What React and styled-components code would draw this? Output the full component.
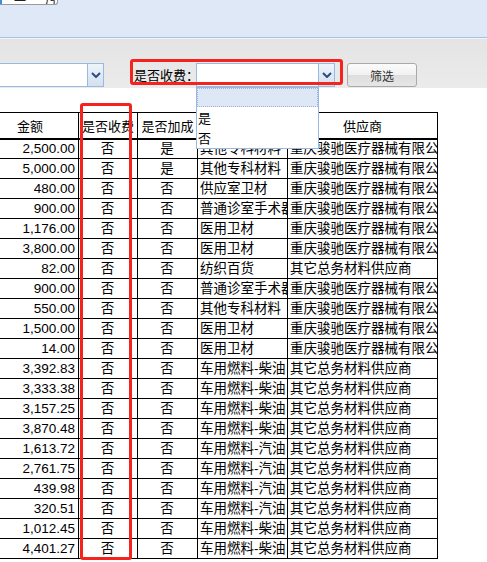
import React from "react";
import styled, { createGlobalStyle } from "styled-components";

const GlobalStyle = createGlobalStyle`
  * { box-sizing: border-box; }
  body { margin: 0; background: #fff; }
`;

const rows = [
  ["2,500.00", "否", "是", "其他专科材料", "重庆骏驰医疗器械有限公司"],
  ["5,000.00", "否", "是", "其他专科材料", "重庆骏驰医疗器械有限公司"],
  ["480.00", "否", "否", "供应室卫材", "重庆骏驰医疗器械有限公司"],
  ["900.00", "否", "否", "普通诊室手术器械", "重庆骏驰医疗器械有限公司"],
  ["1,176.00", "否", "否", "医用卫材", "重庆骏驰医疗器械有限公司"],
  ["3,800.00", "否", "否", "医用卫材", "重庆骏驰医疗器械有限公司"],
  ["82.00", "否", "否", "纺织百货", "其它总务材料供应商"],
  ["900.00", "否", "否", "普通诊室手术器械", "重庆骏驰医疗器械有限公司"],
  ["550.00", "否", "否", "其他专科材料", "重庆骏驰医疗器械有限公司"],
  ["1,500.00", "否", "否", "医用卫材", "重庆骏驰医疗器械有限公司"],
  ["14.00", "否", "否", "医用卫材", "重庆骏驰医疗器械有限公司"],
  ["3,392.83", "否", "否", "车用燃料-柴油", "其它总务材料供应商"],
  ["3,333.38", "否", "否", "车用燃料-柴油", "其它总务材料供应商"],
  ["3,157.25", "否", "否", "车用燃料-柴油", "其它总务材料供应商"],
  ["3,870.48", "否", "否", "车用燃料-柴油", "其它总务材料供应商"],
  ["1,613.72", "否", "否", "车用燃料-汽油", "其它总务材料供应商"],
  ["2,761.75", "否", "否", "车用燃料-汽油", "其它总务材料供应商"],
  ["439.98", "否", "否", "车用燃料-汽油", "其它总务材料供应商"],
  ["320.51", "否", "否", "车用燃料-汽油", "其它总务材料供应商"],
  ["1,012.45", "否", "否", "车用燃料-柴油", "其它总务材料供应商"],
  ["4,401.27", "否", "否", "车用燃料-柴油", "其它总务材料供应商"],
];

const Chevron = () => (
  <svg width="10" height="6" viewBox="0 0 10 6">
    <path d="M1 1 L5 5 L9 1" fill="none" stroke="#2b4a7e" strokeWidth="2" />
  </svg>
);

const Combo = ({ width, offset, children }) => (
  <ComboBox $width={width} $offset={offset}>
    <ComboField />
    <ComboArrow>
      <Chevron />
    </ComboArrow>
    {children}
  </ComboBox>
);

export default function App() {
  return (
    <Page>
      <GlobalStyle />
      <TopBar>
        <Tab>
          <span>一</span>
          <span>乃</span>
        </Tab>
      </TopBar>
      <FilterBar>
        <Combo width={144} offset={-40} />
        <FilterGroup>
          <Label>是否收费：</Label>
          <Combo width={139}>
            <DropList>
              <Option $active />
              <Option>是</Option>
              <Option>否</Option>
            </DropList>
          </Combo>
          <Mark />
        </FilterGroup>
        <FilterButton>筛选</FilterButton>
      </FilterBar>
      <Body>
        <TableWrap>
          <Grid>
            <colgroup>
              <col style={{ width: 97 }} />
              <col style={{ width: 59 }} />
              <col style={{ width: 60 }} />
              <col style={{ width: 90 }} />
              <col style={{ width: 150 }} />
            </colgroup>
            <thead>
              <tr>
                <Th>金额</Th>
                <Th>是否收费</Th>
                <Th>是否加成</Th>
                <Th>物资类别</Th>
                <Th>供应商</Th>
              </tr>
            </thead>
            <tbody>
              {rows.map((r, i) => (
                <tr key={i}>
                  <Td $align="right">{r[0]}</Td>
                  <Td $align="center">{r[1]}</Td>
                  <Td $align="center">{r[2]}</Td>
                  <Td>{r[3]}</Td>
                  <Td>{r[4]}</Td>
                </tr>
              ))}
            </tbody>
          </Grid>
          <ColumnMark />
        </TableWrap>
      </Body>
    </Page>
  );
}

const Page = styled.div`
  width: 487px;
  height: 562px;
  overflow: hidden;
  background: #fff;
  font-family: "Liberation Sans", "Noto Sans CJK SC", sans-serif;
  font-size: 13px;
  color: #000;
`;

const TopBar = styled.div`
  height: 38px;
  background: #dfe8f6;
  border-bottom: 1px solid #a3c2e8;
`;

const Tab = styled.div`
  width: 58px;
  height: 5px;
  background: #fff;
  border: 1px solid #9a9a9a;
  border-top: none;
  border-left: 2px solid #3f8fd0;
  border-radius: 0 0 3px 0;
  overflow: hidden;
  display: flex;
  gap: 18px;
  padding-left: 12px;
  font-size: 12px;
  line-height: 4px;
  color: #222;
`;

const FilterBar = styled.div`
  height: 50px;
  border-top: 1px solid #f4f4f4;
  padding-bottom: 1px;
  background: linear-gradient(#e4e4e4, #ebebeb);
  display: flex;
  align-items: flex-end;
`;

const ComboBox = styled.div`
  position: relative;
  width: ${(p) => p.$width}px;
  margin-left: ${(p) => p.$offset || 0}px;
  height: 24px;
  display: flex;
  border: 1px solid #99b9e0;
  background: #fff;
`;

const ComboField = styled.div`
  flex: 1;
`;

const ComboArrow = styled.div`
  width: 16px;
  border-left: 1px solid #99b9e0;
  background: linear-gradient(#eef4fb, #d3e0ef);
  display: flex;
  align-items: center;
  justify-content: center;
`;

const FilterGroup = styled.div`
  position: relative;
  display: flex;
  align-items: center;
  margin-left: 30px;
`;

const Label = styled.span`
  width: 62px;
  white-space: nowrap;
  font-family: "Noto Sans CJK SC", sans-serif;
  font-size: 13px;
  line-height: 24px;
`;

const Mark = styled.div`
  position: absolute;
  left: -4px;
  top: -4px;
  width: 213px;
  height: 26px;
  border: 3px solid #f5231d;
  border-radius: 3px;
  pointer-events: none;
`;

const DropList = styled.div`
  position: absolute;
  left: -1px;
  top: 23px;
  width: 123px;
  height: 62px;
  background: #fff;
  border: 1px solid #99b9e0;
  z-index: 3;
  font-family: "Noto Sans CJK SC", sans-serif;
  font-size: 13px;
`;

const Option = styled.div`
  height: ${(p) => (p.$active ? 19 : 20)}px;
  line-height: 20px;
  padding-left: 1px;
  ${(p) =>
    p.$active &&
    `
    margin: 0 0 1px;
    background: #dde7f5;
    border: 1px dotted #9cb5dc;
  `}
`;

const FilterButton = styled.button`
  margin-left: 12px;
  width: 70px;
  height: 24px;
  border: 1px solid #a9a9a9;
  border-radius: 3px;
  background: linear-gradient(#fbfbfb 0%, #f1f1f1 50%, #dedede 52%, #e6e6e6 100%);
  font-family: "Noto Sans CJK SC", sans-serif;
  font-size: 12px;
  color: #333;
  padding: 0;
`;

const Body = styled.div`
  padding-top: 24px;
`;

const TableWrap = styled.div`
  position: relative;
  margin-left: -19px;
  width: 456px;
`;

const Grid = styled.table`
  border-collapse: collapse;
  table-layout: fixed;
  width: 456px;
`;

const Th = styled.th`
  height: 26px;
  padding: 0;
  border: 1px solid #000;
  border-bottom: 2px solid #000;
  font-weight: normal;
  font-family: "Noto Sans CJK SC", sans-serif;
  font-size: 13px;
  white-space: nowrap;
  overflow: hidden;
  text-align: center;
`;

const Td = styled.td`
  height: 20px;
  padding: 0 3px 0 2px;
  border: 1px solid #000;
  white-space: nowrap;
  overflow: hidden;
  text-align: ${(p) => p.$align || "left"};
  font-size: 13.5px;
  line-height: 18px;
`;

const ColumnMark = styled.div`
  position: absolute;
  left: 99px;
  top: -9px;
  width: 52px;
  height: 457px;
  border: 3px solid #f5231d;
  border-radius: 3px;
  pointer-events: none;
`;
